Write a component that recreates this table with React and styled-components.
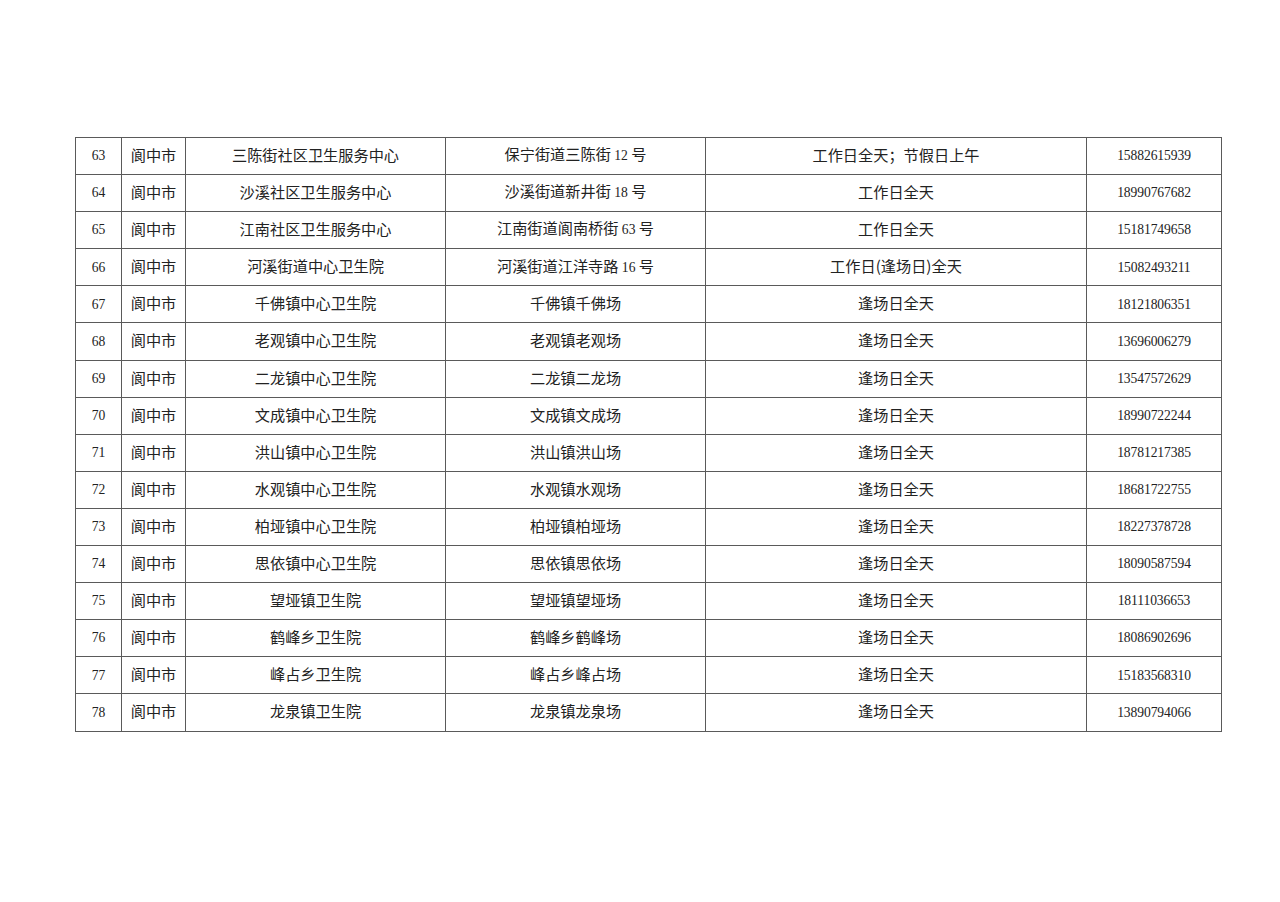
import React from "react";
import styled, { createGlobalStyle } from "styled-components";

const Global = createGlobalStyle`
  html, body { margin: 0; padding: 0; background: #ffffff; }
  body { font-family: "Noto Sans CJK SC", "Noto Sans", sans-serif; color: #222; }
`;

const Page = styled.div`
  width: 1280px;
  height: 902px;
  box-sizing: border-box;
  padding: 137px 0 0 75px;
  background: #fff;
`;

const Table = styled.table`
  border-collapse: collapse;
  table-layout: fixed;
  width: 1146px;
`;

const Row = styled.tr`
  height: 37.1px;
`;

const Cell = styled.td`
  border: 1px solid #5a5a5a;
  padding: 0 0 ${(p) => (p.$num ? "0" : "3px")} 0;
  text-align: center;
  vertical-align: middle;
  font-size: 15.2px;
  line-height: 1;
  color: #222;
  white-space: nowrap;
  font-family: ${(p) =>
    p.$num
      ? '"Liberation Serif", "Times New Roman", serif'
      : '"Noto Sans CJK SC", "Noto Sans", sans-serif'};
  ${(p) => (p.$num ? "font-size: 13.6px; letter-spacing: -0.1px;" : "")}
`;

const Num = styled.span`
  font-family: "Liberation Serif", "Times New Roman", serif;
  font-size: 13.6px;
`;

const cols = [46, 64, 260, 260, 381, 135];

const rows = [
  ["63", "三陈街社区卫生服务中心", ["保宁街道三陈街 ", "12", " 号"], "工作日全天；节假日上午", "15882615939"],
  ["64", "沙溪社区卫生服务中心", ["沙溪街道新井街 ", "18", " 号"], "工作日全天", "18990767682"],
  ["65", "江南社区卫生服务中心", ["江南街道阆南桥街 ", "63", " 号"], "工作日全天", "15181749658"],
  ["66", "河溪街道中心卫生院", ["河溪街道江洋寺路 ", "16", " 号"], "工作日(逢场日)全天", "15082493211"],
  ["67", "千佛镇中心卫生院", "千佛镇千佛场", "逢场日全天", "18121806351"],
  ["68", "老观镇中心卫生院", "老观镇老观场", "逢场日全天", "13696006279"],
  ["69", "二龙镇中心卫生院", "二龙镇二龙场", "逢场日全天", "13547572629"],
  ["70", "文成镇中心卫生院", "文成镇文成场", "逢场日全天", "18990722244"],
  ["71", "洪山镇中心卫生院", "洪山镇洪山场", "逢场日全天", "18781217385"],
  ["72", "水观镇中心卫生院", "水观镇水观场", "逢场日全天", "18681722755"],
  ["73", "柏垭镇中心卫生院", "柏垭镇柏垭场", "逢场日全天", "18227378728"],
  ["74", "思依镇中心卫生院", "思依镇思依场", "逢场日全天", "18090587594"],
  ["75", "望垭镇卫生院", "望垭镇望垭场", "逢场日全天", "18111036653"],
  ["76", "鹤峰乡卫生院", "鹤峰乡鹤峰场", "逢场日全天", "18086902696"],
  ["77", "峰占乡卫生院", "峰占乡峰占场", "逢场日全天", "15183568310"],
  ["78", "龙泉镇卫生院", "龙泉镇龙泉场", "逢场日全天", "13890794066"],
];

const Address = ({ value }) =>
  Array.isArray(value) ? (
    <>
      {value[0]}
      <Num>{value[1]}</Num>
      {value[2]}
    </>
  ) : (
    value
  );

export default function App() {
  return (
    <>
      <Global />
      <Page>
        <Table>
          <colgroup>
            {cols.map((w, i) => (
              <col key={i} style={{ width: w }} />
            ))}
          </colgroup>
          <tbody>
            {rows.map((r) => (
              <Row key={r[0]}>
                <Cell $num>{r[0]}</Cell>
                <Cell>阆中市</Cell>
                <Cell>{r[1]}</Cell>
                <Cell>
                  <Address value={r[2]} />
                </Cell>
                <Cell>{r[3]}</Cell>
                <Cell $num>{r[4]}</Cell>
              </Row>
            ))}
          </tbody>
        </Table>
      </Page>
    </>
  );
}
